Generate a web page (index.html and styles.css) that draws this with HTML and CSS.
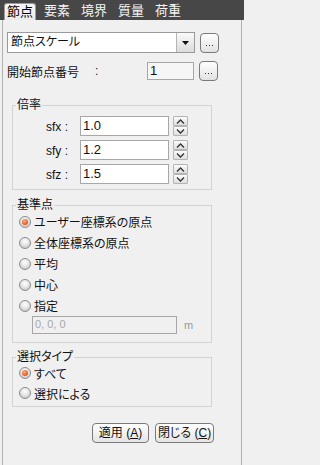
FILE: index.html
```html
<!DOCTYPE html>
<html lang="ja">
<head>
<meta charset="utf-8">
<link rel="stylesheet" href="styles.css">
</head>
<body>
<div class="app">
  <div class="tabs">
    <div class="tab active">節点</div>
    <div class="tab">要素</div>
    <div class="tab">境界</div>
    <div class="tab">質量</div>
    <div class="tab">荷重</div>
  </div>
  <div class="panel">
    <div class="row r1">
      <div class="select">
        <span class="sel-text">節点スケール</span>
        <span class="sel-arrow"><svg width="7" height="4" viewBox="0 0 7 4"><path d="M0 0h7L3.5 4z" fill="#111"/></svg></span>
      </div>
      <div class="dots"><span class="dot"></span><span class="dot"></span><span class="dot"></span></div>
    </div>
    <div class="row r2">
      <span class="lbl">開始節点番号</span>
      <span class="colon">:</span>
      <div class="input num">1</div>
      <div class="dots"><span class="dot"></span><span class="dot"></span><span class="dot"></span></div>
    </div>

    <fieldset class="group g1">
      <legend>倍率</legend>
      <div class="srow first">
        <span class="slbl">sfx :</span>
        <div class="input sin">1.0</div>
        <div class="spin">
          <span class="sb"><svg width="9" height="5" viewBox="0 0 9 5"><path d="M1 4.5L4.5 1L8 4.5" stroke="#333" fill="none" stroke-width="1.3"/></svg></span>
          <span class="sb"><svg width="9" height="5" viewBox="0 0 9 5"><path d="M1 0.5L4.5 4L8 0.5" stroke="#333" fill="none" stroke-width="1.3"/></svg></span>
        </div>
      </div>
      <div class="srow">
        <span class="slbl">sfy :</span>
        <div class="input sin">1.2</div>
        <div class="spin">
          <span class="sb"><svg width="9" height="5" viewBox="0 0 9 5"><path d="M1 4.5L4.5 1L8 4.5" stroke="#333" fill="none" stroke-width="1.3"/></svg></span>
          <span class="sb"><svg width="9" height="5" viewBox="0 0 9 5"><path d="M1 0.5L4.5 4L8 0.5" stroke="#333" fill="none" stroke-width="1.3"/></svg></span>
        </div>
      </div>
      <div class="srow">
        <span class="slbl">sfz :</span>
        <div class="input sin">1.5</div>
        <div class="spin">
          <span class="sb"><svg width="9" height="5" viewBox="0 0 9 5"><path d="M1 4.5L4.5 1L8 4.5" stroke="#333" fill="none" stroke-width="1.3"/></svg></span>
          <span class="sb"><svg width="9" height="5" viewBox="0 0 9 5"><path d="M1 0.5L4.5 4L8 0.5" stroke="#333" fill="none" stroke-width="1.3"/></svg></span>
        </div>
      </div>
    </fieldset>

    <fieldset class="group g2">
      <legend>基準点</legend>
      <div class="rrow first"><span class="radio on"></span><span>ユーザー座標系の原点</span></div>
      <div class="rrow"><span class="radio"></span><span>全体座標系の原点</span></div>
      <div class="rrow"><span class="radio"></span><span>平均</span></div>
      <div class="rrow"><span class="radio"></span><span>中心</span></div>
      <div class="rrow"><span class="radio"></span><span>指定</span></div>
      <div class="coord-row">
        <div class="input coord">0, 0, 0</div>
        <span class="unit">m</span>
      </div>
    </fieldset>

    <fieldset class="group g3">
      <legend>選択タイプ</legend>
      <div class="rrow first"><span class="radio on"></span><span>すべて</span></div>
      <div class="rrow"><span class="radio"></span><span>選択による</span></div>
    </fieldset>

    <div class="actions">
      <div class="btn apply">適用 (<u>A</u>)</div>
      <div class="btn close">閉じる (<u>C</u>)</div>
    </div>
  </div>
</div>
</body>
</html>
```

FILE: styles.css
```css
* { box-sizing: border-box; }
html, body { margin: 0; padding: 0; }
body {
  width: 244px;
  height: 465px;
  overflow: hidden;
  background: #f0f0f0;
  font-family: "Liberation Sans", "Noto Sans CJK JP", sans-serif;
  font-size: 12px;
  color: #111;
  font-feature-settings: "palt";
}
.app { width: 244px; height: 465px; }

.tabs {
  height: 20px;
  background: #474747;
  display: flex;
  align-items: flex-end;
  padding-left: 4px;
  gap: 5px;
}
.tab {
  height: 17px;
  line-height: 16px;
  padding: 0 3px;
  font-size: 13px;
  color: #f4f4f4;
  font-feature-settings: normal;
}
.tab.active {
  background: linear-gradient(#f6f6f6, #ebebeb);
  color: #000;
  border-radius: 3px 3px 0 0;
  border: 1px solid #9c9c9c;
  border-bottom: none;
  padding: 0 2px;
}

.panel {
  margin-left: 2px;
  width: 240px;
  height: 445px;
  border-left: 1px solid #b0b0b0;
  border-right: 1px solid #b0b0b0;
  background: #f0f0f0;
  padding: 12px 0 0 4px;
}

.row { display: flex; align-items: center; }
.r1 { height: 21px; gap: 5px; }
.select {
  width: 188px;
  height: 21px;
  border: 1px solid #9a9a9a;
  background: #fff;
  display: flex;
  align-items: center;
}
.sel-text { flex: 1; padding-left: 3px; font-size: 12px; line-height: 19px; }
.sel-arrow {
  width: 18px;
  height: 19px;
  border-left: 1px solid #b5b5b5;
  background: linear-gradient(#fafafa, #dcdcdc);
  display: flex;
  align-items: center;
  justify-content: center;
}
.dots {
  width: 19px;
  height: 20px;
  border: 1px solid #7a7a7a;
  border-radius: 4px;
  background: linear-gradient(#ffffff, #e2e2e2);
  display: flex;
  justify-content: center;
  align-items: flex-end;
  gap: 2px;
  padding-bottom: 6px;
}
.dot { width: 1px; height: 1px; background: #333; }

.r2 { margin-top: 8px; height: 20px; }
.lbl { width: 88px; font-size: 12px; }
.colon { width: 52px; }
.input {
  border: 1px solid #a7a7a7;
  background: #fff;
  padding-left: 2px;
  line-height: 15px;
}
.num { width: 47px; height: 18px; background: #f6f6f6; font-size: 13px; margin-right: 5px; }

.group {
  margin: 0 0 0 5px;
  padding: 0;
  width: 200px;
  border: 1px solid #d3d3d3;
  min-width: 0;
}
.group legend {
  margin-left: 3px;
  padding: 0 1px;
  line-height: 14px;
  font-size: 12px;
}
.g1 { margin-top: 17px; padding-bottom: 5px; }
.srow { display: flex; height: 20px; margin-top: 4px; }
.srow.first { margin-top: 4px; }
.slbl { width: 55px; text-align: right; margin-right: 12px; line-height: 22px; }
.sin { width: 89px; height: 20px; font-size: 13px; padding-top: 1px; margin-right: 4px; }
.spin { display: flex; flex-direction: column; width: 15px; height: 20px; }
.sb {
  height: 10px;
  border: 1px solid #b4b4b4;
  border-radius: 1px;
  background: linear-gradient(#fbfbfb, #dedede);
  display: flex;
  align-items: center;
  justify-content: center;
}

.g2 { margin-top: 8px; padding-bottom: 8px; }
.rrow { display: flex; align-items: center; height: 21px; padding-left: 6px; gap: 3px; }
.rrow.first { margin-top: -1px; }
.radio {
  width: 12px;
  height: 12px;
  border-radius: 50%;
  border: 1px solid #8e8e8e;
  background: radial-gradient(circle at 50% 35%, #ffffff 0%, #e6e6e6 45%, #b9b9b9 100%);
  display: flex;
  align-items: center;
  justify-content: center;
}
.radio.on::after {
  content: "";
  width: 6px;
  height: 6px;
  border-radius: 50%;
  background: radial-gradient(circle at 40% 35%, #ffb080, #e8501a 70%);
}
.coord-row { display: flex; align-items: center; margin-left: 19px; height: 18px; }
.coord { width: 145px; height: 18px; background: #f0f0f0; color: #a8a8a8; font-size: 11px; margin-right: 7px; }
.unit { color: #9a9a9a; font-size: 11px; }

.g3 { margin-top: 7px; padding-bottom: 3px; }
.g3 .rrow { height: 20px; }

.actions { display: flex; gap: 6px; margin: 16px 0 0 85px; }
.btn {
  height: 20px;
  border: 1px solid #7a7a7a;
  border-radius: 4px;
  background: linear-gradient(#ffffff, #e4e4e4);
  text-align: center;
  line-height: 18px;
  font-size: 12px;
}
.btn u { text-underline-offset: 1px; }
.apply { width: 57px; }
.close { width: 59px; }
```
